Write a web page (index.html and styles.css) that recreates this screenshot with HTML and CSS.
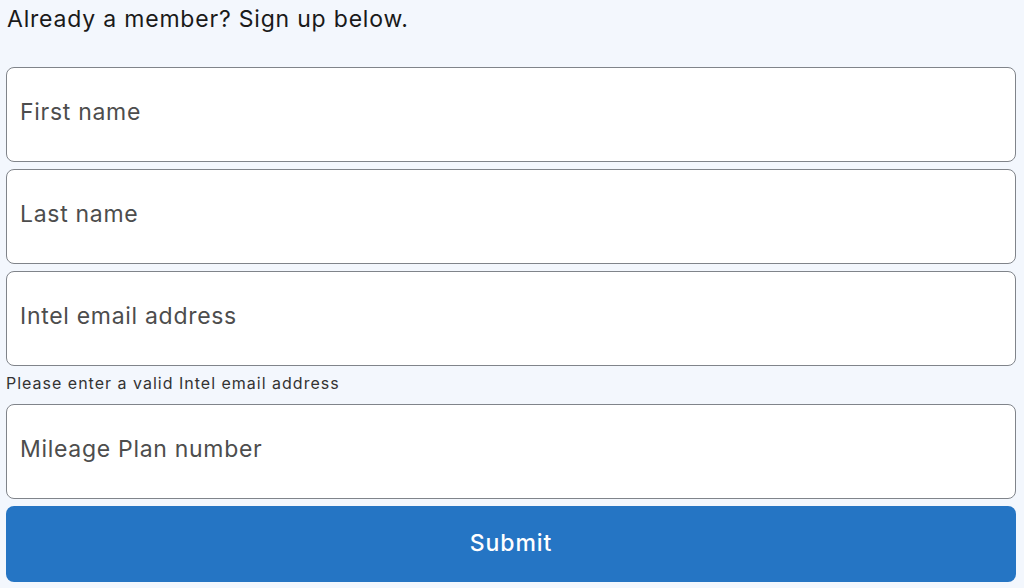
FILE: index.html
```html
<!DOCTYPE html>
<html>
<head>
<meta charset="utf-8">
<link rel="stylesheet" href="styles.css">
</head>
<body>
<div class="page">
  <p class="intro">Already a member? Sign up below.</p>
  <form class="form">
    <input class="field" type="text" placeholder="First name">
    <input class="field" type="text" placeholder="Last name">
    <input class="field" type="email" placeholder="Intel email address">
    <p class="hint">Please enter a valid Intel email address</p>
    <input class="field" type="text" placeholder="Mileage Plan number">
    <button class="submit" type="button">Submit</button>
  </form>
</div>
</body>
</html>
```

FILE: styles.css
```css
html, body {
  margin: 0;
  padding: 0;
  background: #f3f7fd;
}
.page {
  padding: 4px 8px 0 6px;
  font-family: Inter, "Liberation Sans", sans-serif;
}
.intro {
  margin: 0 0 0 1px;
  font-size: 23px;
  letter-spacing: 0.8px;
  line-height: 30px;
  color: #1a1a1a;
}
.form {
  display: flex;
  flex-direction: column;
  gap: 7px;
  margin-top: 33px;
}
.field {
  box-sizing: border-box;
  width: 100%;
  height: 95px;
  margin: 0;
  padding: 0 0 5px 13px;
  border: 1px solid #80848a;
  border-radius: 8px;
  background: #fff;
  font-family: Inter, "Liberation Sans", sans-serif;
  font-size: 23px;
  letter-spacing: 0.7px;
  color: #333;
  outline: none;
}
.field::placeholder {
  color: #4d4d4d;
}
.hint {
  margin: -2px 0 2px 0;
  font-size: 16px;
  letter-spacing: 1px;
  line-height: 24px;
  color: #333;
}
.submit {
  height: 76px;
  border: none;
  border-radius: 8px;
  background: #2575c4;
  color: #fff;
  font-family: Inter, "Liberation Sans", sans-serif;
  font-size: 23px;
  font-weight: 500;
  letter-spacing: 0.9px;
  padding-bottom: 3px;
  cursor: pointer;
}
```
